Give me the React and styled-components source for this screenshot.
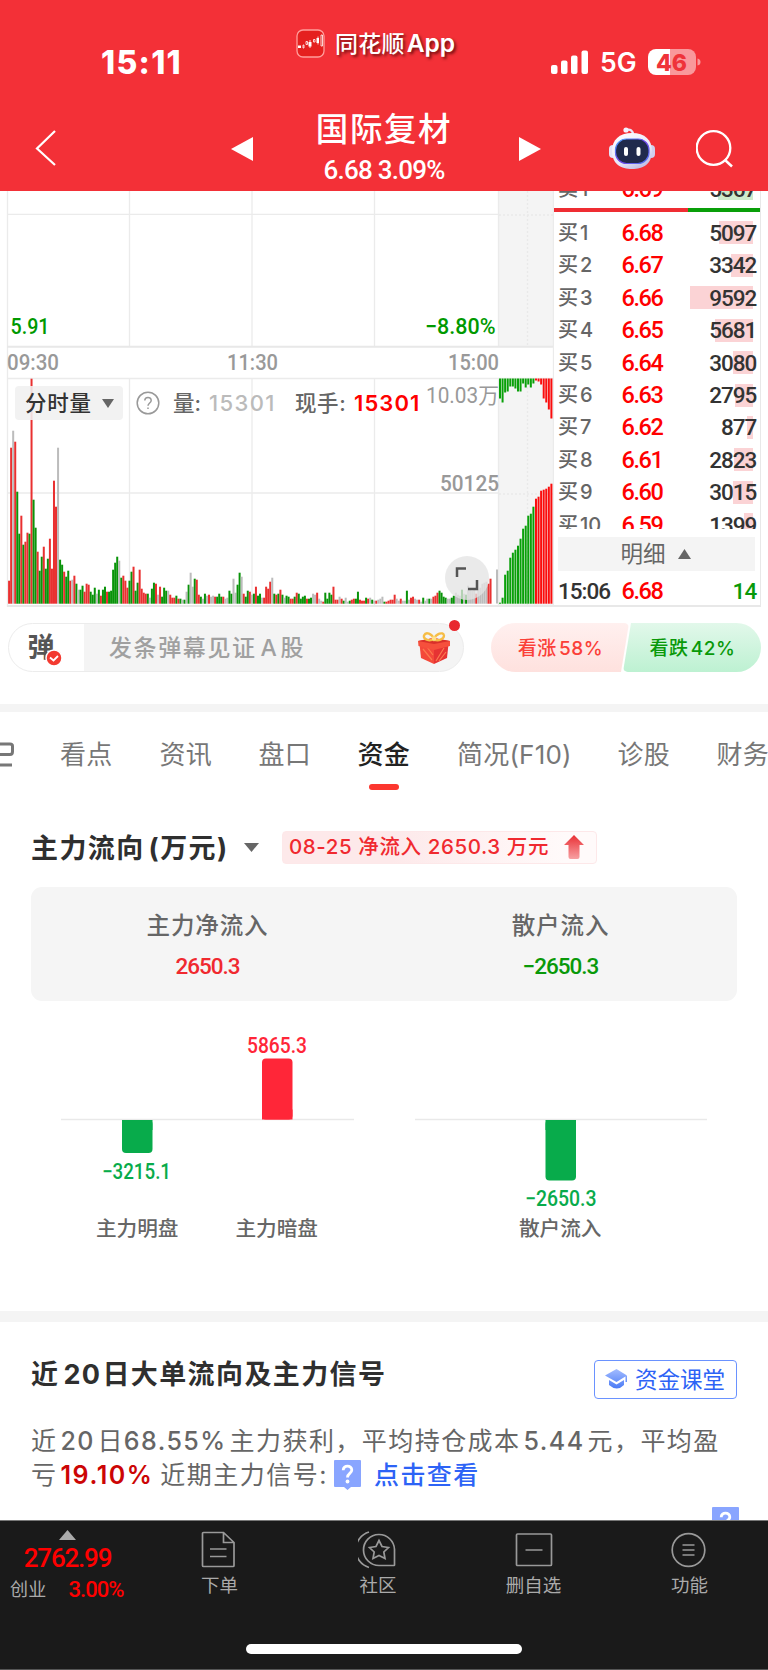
import React from "react";
import styled, { createGlobalStyle } from "styled-components";

const sans = `Inter, "Noto Sans CJK SC", sans-serif`;
const din = `Roboto, "Noto Sans CJK SC", sans-serif`;
const RED = "#e93030";
const GREEN = "#099309";
const GREY = "#bcbcbc";

const Global = createGlobalStyle`
  * { box-sizing: border-box; }
  body { margin: 0; background: #fff; font-family: ${sans}; }
  svg { display: block; flex: none; }
`;

const Text = styled.span`
  flex: none;
  white-space: nowrap;
  font-family: ${(p) => (p.$din ? din : sans)};
  font-size: ${(p) => p.$size}px;
  font-weight: ${(p) => p.$weight || 400};
  letter-spacing: ${(p) => p.$track || 0}px;
  color: ${(p) => p.$color || "#666"};
  line-height: ${(p) => p.$line || 30}px;
`;
/* latin run inside Chinese text, with a little air on both sides */
const Latin = styled.span`
  margin: 0 ${(p) => p.$r ?? 3}px 0 ${(p) => p.$l ?? 3}px;
  font-weight: ${(p) => p.$weight || "inherit"};
  color: ${(p) => p.$color || "inherit"};
`;

const Page = styled.div`
  width: 768px;
  height: 1670px;
  overflow: hidden;
  display: flex;
  flex-direction: column;
  background: #fff;
`;

/* ---------- header ---------- */
const Header = styled.header`
  height: 191px;
  flex: none;
  background: #f33037;
  color: #fff;
`;
const StatusBar = styled.div`
  height: 96px;
  display: grid;
  grid-template-columns: 296px 255px 1fr;
  align-items: start;
`;
const Clock = styled.div`
  padding: 43px 0 0 101px;
`;
const AppMark = styled.div`
  display: flex;
  align-items: center;
  gap: 10px;
  padding-top: 28px;
  text-shadow: 2px 2px 3px rgba(60, 0, 0, 0.7);
`;
const Signals = styled.div`
  display: flex;
  align-items: center;
  padding-top: 47px;
`;
const Network = styled.div`
  width: 49px;
  margin-left: 11px;
  margin-right: -1px;
  display: flex;
`;
const NavBar = styled.div`
  height: 95px;
  display: grid;
  grid-template-columns: 231px 22px 1fr 22px 68px 87px 72px;
  align-items: center;
`;
const NavIcon = styled.div`
  padding: ${(p) => p.$pad || "0"};
`;
const TitleBlock = styled.div`
  align-self: start;
  display: flex;
  flex-direction: column;
  align-items: center;
  padding: 12px 4px 0 0;
`;

/* ---------- market area ---------- */
const Body = styled.main`
  height: 1330px;
  flex: none;
  overflow: hidden;
  border-bottom: 1px solid #777;
`;
const Market = styled.section`
  display: flex;
  height: 416px;
`;
const ChartPane = styled.div`
  position: relative;
  width: 554px;
  flex: none;
`;
const ChartTools = styled.div`
  position: absolute;
  left: 15px;
  top: 195px;
  display: flex;
  align-items: center;
  height: 34px;
`;
const Picker = styled.div`
  width: 108px;
  height: 34px;
  padding: 0 9px 0 10px;
  display: flex;
  align-items: center;
  justify-content: space-between;
  border-radius: 4px;
  background: rgba(240, 240, 240, 0.88);
  margin-right: 13px;
`;
const Slot = styled.div`
  width: ${(p) => p.$w}px;
  flex: none;
  display: flex;
  align-items: center;
`;
const Expand = styled.div`
  position: absolute;
  left: 445px;
  top: 365px;
  width: 44px;
  height: 44px;
  border-radius: 50%;
  background: rgba(228, 228, 228, 0.78);
`;
const Book = styled.div`
  width: 207px;
  border-right: 1.5px solid #e8e8e8;
  border-bottom: 2px solid #e8e8e8;
`;
const BookRows = styled.div`
  height: 338px;
  overflow: hidden;
`;
const Ratio = styled.div`
  display: flex;
  height: 4px;
  margin: 3.3px 0 4.5px;
  background: linear-gradient(90deg, #ef2d33 65%, #099f09 65%);
`;
const Row = styled.div`
  height: 32.45px;
  margin-top: ${(p) => (p.$first ? "-18.6px" : "0")};
  padding-left: 4px;
  display: grid;
  grid-template-columns: 63.5px 50px 1fr;
  align-items: center;
`;
const Amount = styled.div`
  height: 23px;
  margin-right: 7px;
  display: flex;
  justify-content: flex-end;
  align-items: center;
  background: linear-gradient(${(p) => p.$tint}, ${(p) => p.$tint}) right / ${(p) => p.$bar}px 100% no-repeat;
  & > span { margin-right: -3.3px; }
`;
const Detail = styled.div`
  height: 34px;
  margin: 8px 5px 4px 4px;
  background: #f4f4f4;
  display: flex;
  align-items: center;
  justify-content: center;
  gap: 12px;
  padding-right: 2px;
`;

/* ---------- comment strip ---------- */
const Strip = styled.section`
  display: flex;
  height: 97px;
  padding: 16px 7px 0 8px;
`;
const Composer = styled.div`
  position: relative;
  width: 456px;
  height: 49px;
  display: flex;
  align-items: center;
  border: 1.5px solid #ececec;
  border-radius: 25px;
  background: linear-gradient(90deg, #fff 75px, #f4f4f4 75px);
`;
const BulletIcon = styled.div`
  position: relative;
  width: 100px;
  padding-left: 18.5px;
  display: flex;
`;
const Check = styled.div`
  position: absolute;
  left: 36px;
  top: 16px;
`;
const Gift = styled.div`
  position: absolute;
  right: 13px;
  top: 7px;
`;
const Dot = styled.div`
  position: absolute;
  right: 3px;
  top: -4px;
  width: 11px;
  height: 11px;
  border-radius: 50%;
  background: #e8282e;
`;
const Votes = styled.div`
  display: flex;
  margin-left: 27px;
  width: 270px;
  height: 49px;
`;
const Vote = styled.div`
  width: 138px;
  height: 49px;
  padding: 2px 0 0 1px;
  display: flex;
  align-items: center;
  justify-content: center;
  background: ${(p) => (p.$up ? "linear-gradient(#fff0ef,#fee1de)" : "linear-gradient(#e2f8ea,#bdf1d2)")};
  border-radius: ${(p) => (p.$up ? "25px 5px 5px 25px" : "5px 25px 25px 5px")};
  clip-path: ${(p) => (p.$up ? "polygon(0 0,100% 0,calc(100% - 8px) 100%,0 100%)" : "polygon(8px 0,100% 0,100% 100%,0 100%)")};
  margin-left: ${(p) => (p.$up ? 0 : "-6px")};
`;
const Gap = styled.div`
  height: ${(p) => p.$h}px;
  background: #f4f4f4;
`;

/* ---------- tabs ---------- */
const Tabs = styled.nav`
  display: flex;
  height: 113px;
  padding-top: 27px;
  overflow: hidden;
`;
const Tab = styled.div`
  width: ${(p) => p.$w}px;
  flex: none;
  display: flex;
  flex-direction: column;
  align-items: flex-start;
`;
const Underline = styled.div`
  width: 30px;
  height: 6px;
  margin: 13px 0 0 11px;
  border-radius: 3px;
  background: #fc372f;
`;

/* ---------- capital flow ---------- */
const FlowHead = styled.div`
  display: flex;
  align-items: center;
  height: 44px;
  padding-left: 31px;
`;
const FlowTitle = styled.div`
  width: 213px;
  flex: none;
  padding-top: 3px;
`;
const FlowTag = styled.div`
  width: 315px;
  height: 33px;
  margin-left: 23px;
  padding: 0 12px 0 6px;
  display: flex;
  align-items: center;
  justify-content: space-between;
  border: 1px solid #fde8e9;
  border-radius: 4px;
  background: linear-gradient(90deg, #fde9ea 35%, #fffafa 90%);
`;
const Summary = styled.div`
  height: 114px;
  margin: 18px 31px 0;
  padding-top: 22px;
  display: grid;
  grid-template-columns: 1fr 1fr;
  border-radius: 11px;
  background: #f5f5f5;
`;
const Stat = styled.div`
  display: flex;
  flex-direction: column;
  align-items: center;
  gap: 8px;
`;

/* ---------- signal section ---------- */
const Signal = styled.section`
  padding: 36px 31px 0;
`;
const SignalHead = styled.div`
  display: flex;
  justify-content: space-between;
  align-items: flex-start;
  height: 66px;
`;
const SignalTitle = styled.div`
  padding-top: 2px;
`;
const Lesson = styled.div`
  width: 143px;
  height: 39px;
  margin-top: 2px;
  padding-left: 10px;
  display: flex;
  align-items: center;
  gap: 7px;
  border: 1.5px solid #6a92ff;
  border-radius: 4px;
`;
const Line = styled.div`
  display: flex;
  height: 34px;
  align-items: center;
`;
const HelpEnd = styled.div`
  display: flex;
  justify-content: flex-end;
  margin: 15px -2px 0 0;
`;

/* ---------- footer ---------- */
const Footer = styled.footer`
  flex: none;
  height: 149px;
  background: #1a1a1a;
  border-bottom: 1px solid #555;
`;
const FooterNav = styled.div`
  display: grid;
  grid-template-columns: 139px 161px 156px 155px 157px;
  height: 123px;
`;
const Index = styled.div`
  padding: 9px 4px 0 0;
  display: flex;
  flex-direction: column;
  align-items: center;
`;
const IndexRow = styled.div`
  display: flex;
  width: 100%;
  padding-left: 10px;
  gap: 22px;
`;
const FootItem = styled.div`
  padding-top: 9px;
  display: flex;
  flex-direction: column;
  align-items: center;
  gap: 3px;
`;
const HomeBar = styled.div`
  width: 276px;
  height: 10px;
  margin-left: 246px;
  border-radius: 5px;
  background: #fff;
`;

/* each entry: colour letter followed by height in px */
const volume = (
  "r23 r156 w173 r162 g112 g70 r88 g59 r62 r71 g70 r225 g104 g76 r52 g33 g47 r57 g35 g45 r65 r35 r123 r97 w156 g44 g39 r32 g27 g33 r23 w24 r28 g20 w14 g14 g18 r12 r20 r19 " +
  "g12 g9 g16 w10 g14 r8 g14 g17 r12 g12 g13 g34 g41 g47 w43 g26 r28 r23 r16 g23 g32 r37 g13 g21 r34 r15 r11 r10 g10 w6 g15 g21 r20 w9 r17 g7 g16 g13 w13 r9 " +
  "r6 r6 g8 r5 g5 w4 g4 w12 g19 w31 w17 g25 r24 r9 g7 w5 g10 w8 r9 w7 w8 r7 g7 g10 g7 r7 w5 w6 g13 g10 w25 w11 g19 g31 w27 r10 g7 g13 r12 w9 " +
  "g10 r17 g8 g10 w6 r6 r17 r15 r22 w26 g10 r9 g10 r14 g9 w6 g8 g7 r5 r5 g7 r11 g10 g5 g7 g8 r5 g5 g6 w10 w9 r11 w5 w3 r2 g11 g5 g11 g9 r17 " +
  "r4 r4 w7 r5 g3 w6 w2 g3 r4 r5 g5 g12 r4 r3 r3 g6 r5 w6 g4 w3 r3 w4 w5 w7 g2 r2 r3 r4 r4 r9 w5 w3 r5 w3 w3 g13 w4 r6 r7 w5 " +
  "w4 r4 w2 g6 w3 w5 g5 w5 r7 r8 r11 g13 g11 g7 g6 w5 w5 g6 g8 w11 w9 w8 g14 w10 g9 w18 w14 w13 w15 r10 w14 w16 w20 w21 w22 r20 r25"
).split(" ");
const auctionDown = [20, 24, 14, 13, 8, 8, 10, 13, 13, 5, 9, 6, 9, 5, 2, 3, 6, 20, 24, 31, 40];
const auctionUp = [1, 6, 29, 33, 46, 51, 54, 58, 65, 75, 78, 88, 90, 97, 105, 107, 113, 114, 115, 117, 120];
const tone = { r: RED, g: GREEN, w: GREY };

const ChartText = ({ x, y, w, fill = "#999", size = 22, weight = 500, children }) => (
  <text x={x} y={y} textLength={w} lengthAdjust="spacingAndGlyphs" fill={fill} fontSize={size} fontWeight={weight} fontFamily={din}>
    {children}
  </text>
);

const PriceChart = () => (
  <svg width="554" height="416" viewBox="0 191 554 416">
    <rect x="499" y="191" width="54" height="155" fill="#f4f4f4" />
    <rect x="499" y="379" width="54" height="227" fill="#f4f4f4" />
    <g stroke="#ebebeb" strokeWidth="1.3" fill="none">
      {[129.5, 252, 374.5].map((x) => (
        <path key={x} d={`M${x} 191V346M${x} 379V606`} />
      ))}
      <path d="M7.5 191V607M498.5 191V346M498.5 379V606M553.5 191V607M7 214.3H498M7 493H498M7 378.5H553" />
      <path d="M7 346.7H553M7 606H554" stroke="#e8e8e8" strokeWidth="2" />
      <path d="M499 215H553M499 494H553M527.5 191V346M527.5 379V606" stroke="#e9e9e9" strokeDasharray="2 2" />
    </g>
    {volume.map((v, i) => {
      const h = Number(v.slice(1));
      return <rect key={i} x={8.1 + i * 2.04} y={603.7 - h} width="2" height={h} fill={tone[v[0]]} />;
    })}
    <rect x="496" y="569.5" width="2" height="34" fill={GREY} />
    {auctionUp.map((h, i) => (
      <rect key={i} x={499 + i * 2.57} y={603.7 - h} width="2" height={h} fill={i < 14 ? "#09a009" : "#fb0d0d"} />
    ))}
    {auctionDown.map((h, i) => (
      <rect key={i} x={499 + i * 2.57} y="378.5" width="2" height={h} fill={i < 14 ? "#09a009" : "#fb0d0d"} />
    ))}
    <ChartText x={10.5} y={333.5} w={39} fill="#009900">5.91</ChartText>
    <ChartText x={425} y={333.5} w={70.5} fill="#009900">−8.80%</ChartText>
    <ChartText x={7} y={370} w={52}>09:30</ChartText>
    <ChartText x={227} y={370} w={51}>11:30</ChartText>
    <ChartText x={448} y={370} w={51}>15:00</ChartText>
    <ChartText x={426} y={403} w={73} weight={400}>10.03万</ChartText>
    <ChartText x={440} y={491} w={59}>50125</ChartText>
  </svg>
);

const Caret = ({ up, w = 12, h = 9, fill = "#666" }) => (
  <svg width={w} height={h} viewBox="0 0 12 9" preserveAspectRatio="none">
    <path d={up ? "M0 9L6 0L12 9Z" : "M0 0H12L6 9Z"} fill={fill} />
  </svg>
);

const bids = [
  ["买", 1, "6.68", 5097, 34], ["买", 2, "6.67", 3342, 22], ["买", 3, "6.66", 9592, 63],
  ["买", 4, "6.65", 5681, 38], ["买", 5, "6.64", 3080, 20], ["买", 6, "6.63", 2795, 18],
  ["买", 7, "6.62", 877, 6], ["买", 8, "6.61", 2823, 19], ["买", 9, "6.60", 3015, 20], ["买", 10, "6.59", 1399, 9],
];

const BookRow = ({ data: [side, n, price, qty, bar], first }) => (
  <Row $first={first}>
    <Text $size={20} $weight={500}>{side}<Latin $l={2}>{n}</Latin></Text>
    <Text $din $size={23.5} $weight={500} $track={-1.4} $color="#ff0000">{price}</Text>
    <Amount $bar={bar} $tint={first ? "#cdeacb" : "#fbd3d5"}>
      <Text $din $size={22.5} $weight={500} $track={-1} $color="#333">{qty}</Text>
    </Amount>
  </Row>
);

const Help = () => (
  <svg width="27" height="30" viewBox="0 0 27 30">
    <path d="M1 0H26Q27 0 27 1V26Q27 27 26 27H17L13.5 30L10 27H1Q0 27 0 26V1Q0 0 1 0Z" fill="#89a5ff" />
    <path d="M9.2 10.2C9.2 4.6 17.8 4.8 17.8 10C17.8 13.6 13.5 13.2 13.5 17.4" fill="none" stroke="#fff" strokeWidth="2.8" />
    <circle cx="13.5" cy="21.5" r="1.9" fill="#fff" />
  </svg>
);

const Robot = () => (
  <svg width="46" height="43" viewBox="0 0 46 43">
    <defs>
      <linearGradient id="shell" x1="0" y1="0" x2="0.6" y2="1">
        <stop offset="0" stopColor="#fff" /><stop offset="0.7" stopColor="#e8e7f8" /><stop offset="1" stopColor="#c4c2e6" />
      </linearGradient>
      <linearGradient id="rim" x1="0" y1="0" x2="1" y2="1">
        <stop offset="0" stopColor="#48a8ff" /><stop offset="0.5" stopColor="#7042e8" /><stop offset="1" stopColor="#4f7cf2" />
      </linearGradient>
    </defs>
    <path d="M17 3Q24 1.500 24 8" stroke="#e8e6fa" strokeWidth="2.200" fill="none" />
    <circle cx="17" cy="3" r="2.600" fill="#f5f2ff" />
    <rect x="0" y="18" width="8" height="13" rx="4" fill="#e4e3f7" />
    <rect x="38" y="18" width="8" height="13" rx="4" fill="#d0cfee" />
    <path d="M23 6C36 6 43 13 43 24C43 37 34 42 23 42S3 37 3 24C3 13 10 6 23 6Z" fill="url(#shell)" />
    <rect x="6.500" y="12" width="33.500" height="24.500" rx="11" fill="#202a4c" stroke="url(#rim)" strokeWidth="1.200" />
    <rect x="15" y="20" width="4" height="9" rx="2" fill="#fff" />
    <rect x="27.500" y="20" width="4" height="9" rx="2" fill="#fff" />
  </svg>
);

const GiftIcon = () => (
  <svg width="32" height="33" viewBox="0 0 32 33">
    <path d="M1.500 13L16 17V33L3 27Z" fill="#f4493a" />
    <path d="M30.500 13L16 17V33L29 27Z" fill="#e63333" />
    <path d="M5 18L14 29M9 16L15 24M26 17L18 30M28 21L21 30" stroke="#fb7b4f" strokeWidth="1.200" />
    <path d="M0 10L15 7L32 10V15L16 19L0.500 15Z" fill="#f6503c" />
    <path d="M0 10L16 13L32 10L16 7Z" fill="#d9302b" />
    <path d="M16 8C11 11 5 8 6 4.500C8 0 14 3 16 8C18 3 25 0 26 4.500C26 8 20 11 16 8Z" fill="none" stroke="#f6bd45" strokeWidth="2.300" />
    <circle cx="16" cy="7.500" r="2.300" fill="#ffe18a" />
  </svg>
);

const FlowChart = () => {
  const bars = [
    { x: 122, y: 1120, h: 33, v: "−3215.1", vx: 102, vy: 1178.5, vw: 69, c: "#08ab4b", n: "主力明盘", nx: 96, down: true },
    { x: 262, y: 1058.5, h: 61, v: "5865.3", vx: 247, vy: 1053, vw: 60, c: "#ff2638", n: "主力暗盘", nx: 235.5 },
    { x: 545.5, y: 1120, h: 60.5, v: "−2650.3", vx: 525, vy: 1205.5, vw: 71.5, c: "#08ab4b", n: "散户流入", nx: 519, down: true },
  ];
  return (
    <svg width="768" height="310" viewBox="0 1001 768 310">
      <path d="M61 1119.600H354M415 1119.600H707" stroke="#e9e9e9" strokeWidth="1.500" />
      {bars.map((b) => (
        <g key={b.x}>
          <rect x={b.x} y={b.y} width="30.500" height={b.h} rx="4" fill={b.c} />
          <rect x={b.x} y={b.down ? b.y : b.y + b.h - 10} width="30.500" height="10" fill={b.c} />
          <ChartText x={b.vx} y={b.vy} w={b.vw} size={21.5} fill={b.c}>{b.v}</ChartText>
          <ChartText x={b.nx} y={1235.5} w={82.5} size={20} fill="#666">{b.n}</ChartText>
        </g>
      ))}
    </svg>
  );
};

const tabs = [["看点", 99.5], ["资讯", 99], ["盘口", 99], ["资金", 99.5, true], ["简况(F10)", 160.5], ["诊股", 99], ["财务", 60]];

const footItems = [
  ["下单", <path key="a" d="M3.500 2.500Q2.500 2.500 2.500 3.500V35.500Q2.500 36.500 3.500 36.500H33Q34 36.500 34 35.500V12.500L23.500 2.500ZM23.500 2.500V12.500H34M10 19H26.500M10 26.500H26.500" />],
  ["社区", (
    <g key="b">
      <path d="M11 2A18.500 18.500 0 0 0 11 37.500M36.500 35V19.500A15.500 15.500 0 1 0 21 35.500H36Q36.500 35.500 36.500 35Z" />
      <path d="M21 10.500L24 16.500L30.500 17.500L25.800 22L27 28.500L21 25.400L15 28.500L16.200 22L11.500 17.500L18 16.500Z" />
    </g>
  )],
  ["删自选", <path key="c" d="M3.500 4H36.500Q37.500 4 37.500 5V34.500Q37.500 35.500 36.500 35.500H3.500Q2.500 35.500 2.500 34.500V5Q2.500 4 3.500 4ZM11.500 20H28.500" />],
  ["功能", (
    <g key="d"><circle cx="18.500" cy="20" r="16.300" /><path d="M12.500 15H24.500M12.500 20H24.500M12.500 25H24.500" /></g>
  )],
];

export default function App() {
  return (
    <Page>
      <Global />
      <Header>
        <StatusBar>
          <Clock><Text $size={32} $weight={800} $color="#fff" $line={40} $track={1.3}>15:11</Text></Clock>
          <AppMark>
            <svg width="29" height="29" viewBox="0 0 29 29">
              <rect x="1" y="1" width="27" height="27" rx="6" fill="#e5201f" stroke="#ff9d9b" strokeWidth="1.300" />
              <rect x="2" y="16.500" width="3" height="2.500" fill="#fff" />
              <rect x="12.500" y="13" width="3" height="4.500" fill="#fff" />
              <rect x="20.500" y="9" width="2.500" height="5" fill="#fff" />
              <path d="M7 16v3M7 16h1v3h-1M10 12.500h1.500v3h-1.500ZM17.500 10.500h1.500v2.500h-1.500ZM14 11v8M22 7.500v8M25 6h1.500v11h-1.500Z" stroke="#fff" strokeWidth="0.800" fill="none" />
            </svg>
            <Text $size={23} $weight={500} $color="#fff" $track={0.3}>同花顺<Text $size={24.5} $weight={600} $color="#fff" $track={-0.1}>&#8202;App</Text></Text>
          </AppMark>
          <Signals>
            <svg width="38" height="24" viewBox="0 0 38 24">
              <g fill="#fff">
                <rect x="0" y="15" width="6.500" height="9" rx="2" /><rect x="10" y="10.500" width="6.500" height="13.500" rx="2" />
                <rect x="20" y="5.500" width="6.500" height="18.500" rx="2" /><rect x="30.500" y="0.500" width="6.500" height="23.500" rx="2" />
              </g>
            </svg>
            <Network><Text $size={26.5} $weight={600} $color="#fff">5G</Text></Network>
            <svg width="53" height="26" viewBox="0 0 53 26">
              <defs><linearGradient id="charge"><stop offset="46%" stopColor="#fff" /><stop offset="46%" stopColor="#f9989b" /></linearGradient></defs>
              <rect width="48" height="26" rx="8" fill="url(#charge)" />
              <path d="M49.500 9.500Q52.500 10 52.500 13T49.500 16.500Z" fill="#f9989b" />
              <text x="8" y="21.500" textLength="31" fontFamily={sans} fontSize="23" fontWeight="800" fill="#ef3339">46</text>
            </svg>
          </Signals>
        </StatusBar>
        <NavBar>
          <NavIcon $pad="9px 0 0 34px">
            <svg width="22" height="38" viewBox="0 0 22 38"><path d="M21 2L3 19.500L21 36" fill="none" stroke="#fff" strokeWidth="2.200" /></svg>
          </NavIcon>
          <NavIcon $pad="10px 0 0"><svg width="22" height="24"><path d="M0 12L22 0V24Z" fill="#fff" /></svg></NavIcon>
          <TitleBlock>
            <Text $size={32.5} $weight={500} $color="#fff" $track={1.6} $line={44}>国际复材</Text>
            <Text $din $size={26} $weight={500} $color="#fff" $track={-0.75} $line={37}>6.68 3.09%</Text>
          </TitleBlock>
          <NavIcon $pad="10px 0 0"><svg width="22" height="24"><path d="M22 12L0 0V24Z" fill="#fff" /></svg></NavIcon>
          <span />
          <NavIcon $pad="9px 0 0"><Robot /></NavIcon>
          <NavIcon $pad="10px 0 0">
            <svg width="40" height="40" viewBox="0 0 40 40"><circle cx="17.500" cy="19" r="16.800" fill="none" stroke="#fff" strokeWidth="2.300" /><path d="M29 31L36 37.500" stroke="#fff" strokeWidth="2.500" /></svg>
          </NavIcon>
        </NavBar>
      </Header>

      <Body>
        <Market>
          <ChartPane>
            <PriceChart />
            <ChartTools>
              <Picker><Text $size={21.5} $weight={500} $track={0.8} $color="#333">分时量</Text><Caret /></Picker>
              <Slot $w={37}>
                <svg width="24" height="24" viewBox="0 0 24 24" fill="none" stroke="#999" strokeWidth="1.500">
                  <circle cx="12" cy="12" r="10.800" />
                  <path d="M8.800 9.500C8.800 5.500 15.200 5.500 15.200 9.400C15.200 12 12 12 12 14.800M12 16.500V18" />
                </svg>
              </Slot>
              <Slot $w={36}><Text $size={21.5} $weight={500}>量:</Text></Slot>
              <Slot $w={86}><Text $size={22} $weight={500} $track={1.4} $color="#bbb">15301</Text></Slot>
              <Slot $w={59}><Text $size={21.5} $weight={500} $track={0.6}>现手:</Text></Slot>
              <Slot $w={70}><Text $size={22} $weight={600} $track={1.1} $color="#ff0000">15301</Text></Slot>
            </ChartTools>
            <Expand>
              <svg width="44" height="44" viewBox="0 0 44 44"><path d="M12 21V12.500H21M23 33H32V24" fill="none" stroke="#555" strokeWidth="2.500" /></svg>
            </Expand>
          </ChartPane>
          <Book>
            <BookRows>
              <BookRow first data={["卖", 1, "6.69", 5367, 35]} />
              <Ratio />
              {bids.map((b) => <BookRow key={b[1]} data={b} />)}
            </BookRows>
            <Detail><Text $size={22.5}>明细</Text><Caret up w={13} h={10} /></Detail>
            <Row>
              <Text $din $size={22.5} $weight={500} $track={-1} $color="#333">15:06</Text>
              <Text $din $size={23.5} $weight={500} $track={-1.4} $color="#ff0000">6.68</Text>
              <Amount $bar={0} $tint="#fff"><Text $din $size={22.5} $weight={500} $track={-0.9} $color="#099909">14</Text></Amount>
            </Row>
          </Book>
        </Market>

        <Strip>
          <Composer>
            <BulletIcon>
              <Text $size={27} $weight={700} $color="#555">弹</Text>
              <Check>
                <svg width="18" height="18" viewBox="0 0 18 18"><circle cx="9" cy="9" r="8" fill="#f33a30" stroke="#fff" strokeWidth="1.500" /><path d="M5 8.500L8.500 11.500L13 7" fill="none" stroke="#fff" strokeWidth="1.800" /></svg>
              </Check>
            </BulletIcon>
            <Text $size={23} $weight={500} $track={1.6} $color="#a0a0a0">发条弹幕见证<Latin $l={4} $r={2}>A</Latin>股</Text>
            <Gift><GiftIcon /></Gift>
            <Dot />
          </Composer>
          <Votes>
            <Vote $up><Text $size={19} $weight={500} $track={0.6} $color="#fb4038">看涨<Latin $l={2} $r={0}>58%</Latin></Text></Vote>
            <Vote><Text $size={19} $weight={500} $track={0.6} $color="#099909">看跌<Latin $l={2} $r={0}>42%</Latin></Text></Vote>
          </Votes>
        </Strip>
        <Gap $h={8} />

        <Tabs>
          <Tab $w={60}>
            <svg width="16" height="30" viewBox="0 0 16 30"><path d="M0 5H10Q12.500 5 12.500 7V12.500Q12.500 15.500 10 15.500H0M0 26H12" fill="none" stroke="#777" strokeWidth="3" /></svg>
          </Tab>
          {tabs.map(([name, w, on]) => (
            <Tab key={name} $w={w}>
              <Text $size={26} $line={32} $track={0.2} $weight={on ? 500 : 400} $color={on ? "#222" : "#777"}>{name}</Text>
              {on && <Underline />}
            </Tab>
          ))}
        </Tabs>

        <FlowHead>
          <FlowTitle><Text $size={27} $weight={700} $track={1.4} $color="#2f2f2f">主力流向<Latin $l={4} $r={0}>(万元)</Latin></Text></FlowTitle>
          <Caret w={15} h={9} />
          <FlowTag>
            <Text $size={20.5} $weight={500} $track={0.6} $color="#f0292f">08-25 净流入 2650.3 万元</Text>
            <svg width="20" height="24" viewBox="0 0 20 24">
              <defs><linearGradient id="rise" x2="0" y2="1"><stop stopColor="#e93035" /><stop offset="1" stopColor="#f7a0a2" /></linearGradient></defs>
              <path d="M10 0L20 10H15.500V22Q15.500 24 13.500 24H6.500Q4.500 24 4.500 22V10H0Z" fill="url(#rise)" />
            </svg>
          </FlowTag>
        </FlowHead>
        <Summary>
          <Stat><Text $size={23.5} $weight={500} $track={0.9} $line={34}>主力净流入</Text><Text $din $size={22.5} $weight={500} $track={-1} $color="#f0292f">2650.3</Text></Stat>
          <Stat><Text $size={23.5} $weight={500} $track={0.9} $line={34}>散户流入</Text><Text $din $size={22.5} $weight={500} $track={-1} $color="#099909">−2650.3</Text></Stat>
        </Summary>
        <FlowChart />
        <Gap $h={11} />

        <Signal>
          <SignalHead>
            <SignalTitle><Text $size={27} $weight={700} $track={1.4} $color="#2f2f2f">近<Latin $l={4} $r={1}>20</Latin>日大单流向及主力信号</Text></SignalTitle>
            <Lesson>
              <svg width="23" height="21" viewBox="0 0 23 21">
                <defs><linearGradient id="cap" x2="0" y2="1"><stop stopColor="#a3bcff" /><stop offset="1" stopColor="#4b7bf5" /></linearGradient></defs>
                <path d="M11.500 0L22 6.500L11.500 13L0 6.500ZM4 11L11.500 15.500L19 11V16Q12 23 4 16ZM20.500 7H22V13H20.500Z" fill="url(#cap)" />
              </svg>
              <Text $size={22.5} $color="#2d63f6">资金课堂</Text>
            </Lesson>
          </SignalHead>
          <Line>
            <Text $size={25} $track={1.45}>
              近<Latin $weight={500} $r={2.5}>20</Latin>日<Latin $weight={500} $l={0}>68.55%</Latin>主力获利，平均持仓成本<Latin $weight={500}>5.44</Latin>元，平均盈
            </Text>
          </Line>
          <Line>
            <Slot $w={303}>
              <Text $size={25} $track={1.500}>亏<Latin $weight={600} $color="#cc0505" $r={7}>19.10%</Latin>近期主力信号:</Text>
            </Slot>
            <Slot $w={40}><Help /></Slot>
            <Text $size={25} $weight={500} $track={1.400} $color="#2d63f6">点击查看</Text>
          </Line>
          <HelpEnd><Help /></HelpEnd>
        </Signal>
      </Body>

      <Footer>
        <FooterNav>
          <Index>
            <Caret up w={17} h={10} fill="#aaa" />
            <Text $din $size={26} $weight={500} $track={-1.2} $color="#ff0000" $line={37}>2762.99</Text>
            <IndexRow>
              <Text $size={18} $track={0.3} $color="#aaa" $line={25}>创业</Text>
              <Text $din $size={22} $weight={500} $track={-1} $color="#ff0000" $line={25}>3.00%</Text>
            </IndexRow>
          </Index>
          {footItems.map(([name, icon]) => (
            <FootItem key={name}>
              <svg width="40" height="40" viewBox="0 0 40 40" fill="none" stroke="#999" strokeWidth="1.700">{icon}</svg>
              <Text $size={18.5} $color="#aaa" $line={25}>{name}</Text>
            </FootItem>
          ))}
        </FooterNav>
        <HomeBar />
      </Footer>
    </Page>
  );
}
